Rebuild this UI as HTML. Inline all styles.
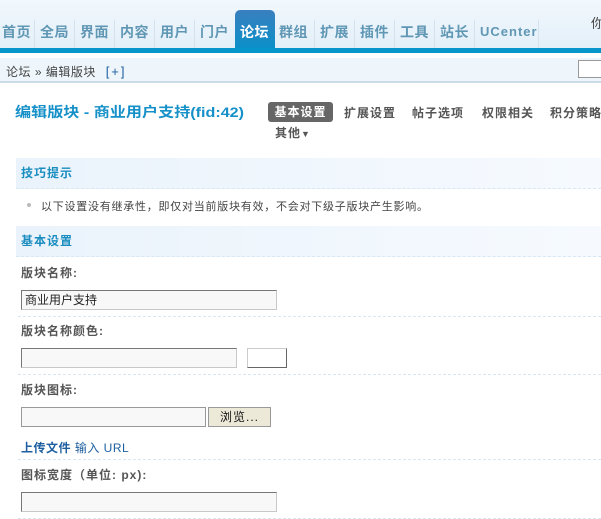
<!DOCTYPE html>
<html><head><meta charset="utf-8"><style>
*{margin:0;padding:0;box-sizing:border-box}
body{width:601px;height:519px;overflow:hidden;background:#fff;font-family:"Liberation Sans","Noto Sans CJK SC","WenQuanYi Zen Hei",sans-serif;font-size:12px;color:#333;position:relative}
.a{position:absolute;white-space:nowrap}
#hd{position:absolute;left:0;top:0;width:601px;height:48px;background:linear-gradient(#f2f8fd,#e3eff8)}
.nav{position:absolute;top:22px;font-size:14px;font-weight:bold;color:#5f97b4;height:20px;line-height:20px;letter-spacing:0.5px}
.sep{position:absolute;top:20px;width:1px;height:28px;background:#d2e2ee}
#act{position:absolute;left:235px;top:10px;width:40px;height:38px;background:linear-gradient(#3a7fbf,#0b8fc8);border-radius:5px 5px 0 0}
#bar{position:absolute;left:0;top:48px;width:601px;height:5px;background:#0796c9}
#bc{position:absolute;left:0;top:58px;width:601px;height:25px;background:#eef6fb;border-bottom:2px solid #c9dce8}
.sec{position:absolute;left:16px;width:585px;height:31px;background:linear-gradient(90deg,#eaf3fb,#f6faff);border-bottom:1px dashed #d7e8f4;color:#1a8dc0;font-weight:bold;font-size:12px;line-height:30px;padding-left:5px;letter-spacing:1px}
.lb{position:absolute;left:21px;font-weight:bold;color:#555;letter-spacing:1px;white-space:nowrap}
.in{position:absolute;left:21px;height:20px;background:#f8f8f8;border:1px solid #c8c8c8;border-top-color:#777;border-left-color:#777}
.dl{position:absolute;left:18px;width:583px;border-top:1px dashed #d7e8f4}
.tb{position:absolute;top:104px;font-weight:bold;color:#555;letter-spacing:1px;white-space:nowrap}
</style></head><body>
<div id="hd"></div>
<div id="act"></div>
<div class="nav" style="left:2px">首页</div><div class="sep" style="left:34px"></div>
<div class="nav" style="left:40px">全局</div><div class="sep" style="left:74px"></div>
<div class="nav" style="left:80px">界面</div><div class="sep" style="left:114px"></div>
<div class="nav" style="left:120px">内容</div><div class="sep" style="left:154px"></div>
<div class="nav" style="left:160px">用户</div><div class="sep" style="left:194px"></div>
<div class="nav" style="left:200px">门户</div>
<div class="nav" style="left:240px;color:#fff">论坛</div>
<div class="nav" style="left:279px">群组</div><div class="sep" style="left:314px"></div>
<div class="nav" style="left:320px">扩展</div><div class="sep" style="left:354px"></div>
<div class="nav" style="left:360px">插件</div><div class="sep" style="left:394px"></div>
<div class="nav" style="left:400px">工具</div><div class="sep" style="left:434px"></div>
<div class="nav" style="left:440px">站长</div><div class="sep" style="left:474px"></div>
<div class="nav" style="left:480px;font-size:13px;letter-spacing:1px">UCenter</div><div class="sep" style="left:538px"></div>
<div class="a" style="left:591px;top:13px;font-size:13px;color:#444">你</div>
<div id="bar"></div>
<div id="bc"></div>
<div class="a" style="left:6px;top:63px;color:#444;letter-spacing:0.5px">论坛 » 编辑版块 <span style="color:#1e5fa0;margin-left:6px;font-size:13px;letter-spacing:2px">[+]</span></div>
<div class="a" style="left:578px;top:60px;width:30px;height:18px;border:1px solid #999;background:#fff"></div>
<div class="a" style="left:15px;top:102px;font-size:14px;font-weight:bold;color:#1590c8;transform:scaleX(1.15);transform-origin:0 0">编辑版块 - 商业用户支持(fid:42)</div>
<div class="a" style="left:268px;top:102px;width:65px;height:20px;background:#666;border-radius:3px;color:#fff;font-weight:bold;text-align:center;line-height:20px;letter-spacing:1px">基本设置</div>
<div class="tb" style="left:344px">扩展设置</div>
<div class="tb" style="left:412px">帖子选项</div>
<div class="tb" style="left:482px">权限相关</div>
<div class="tb" style="left:550px">积分策略</div>
<div class="a" style="left:275px;top:124px;font-weight:bold;color:#555;letter-spacing:1px">其他<span style="font-size:9px">▼</span></div>
<div class="sec" style="top:158px">技巧提示</div>
<div class="a" style="left:27px;top:203px;width:4px;height:4px;background:#bbb;border-radius:2px"></div>
<div class="a" style="left:41px;top:198px;font-size:11px;color:#444;letter-spacing:0.75px">以下设置没有继承性，即仅对当前版块有效，不会对下级子版块产生影响。</div>
<div class="sec" style="top:226px">基本设置</div>
<div class="lb" style="top:264px">版块名称:</div>
<div class="in" style="top:290px;width:256px;font-size:12px;line-height:18px;padding-left:3px;color:#222">商业用户支持</div>
<div class="dl" style="top:316px"></div>
<div class="lb" style="top:322px">版块名称颜色:</div>
<div class="in" style="top:348px;width:216px"></div>
<div class="a" style="left:247px;top:348px;width:40px;height:20px;border:1px solid #666;border-top-color:#ccc;border-left-color:#ccc;background:#fff"></div>
<div class="dl" style="top:374px"></div>
<div class="lb" style="top:381px">版块图标:</div>
<div class="in" style="top:407px;width:185px;border-color:#999"></div>
<div class="a" style="left:208px;top:407px;width:63px;height:20px;background:#ece9d8;border:1px solid #999;text-align:center;line-height:18px;color:#111;letter-spacing:1px">浏览...</div>
<div class="a" style="left:21px;top:439px;color:#1e5fa0;letter-spacing:0.5px"><b>上传文件</b> 输入 URL</div>
<div class="dl" style="top:459px"></div>
<div class="lb" style="top:466px">图标宽度（单位: px):</div>
<div class="in" style="top:492px;width:256px"></div>
<div class="dl" style="top:518px"></div>
</body></html>
